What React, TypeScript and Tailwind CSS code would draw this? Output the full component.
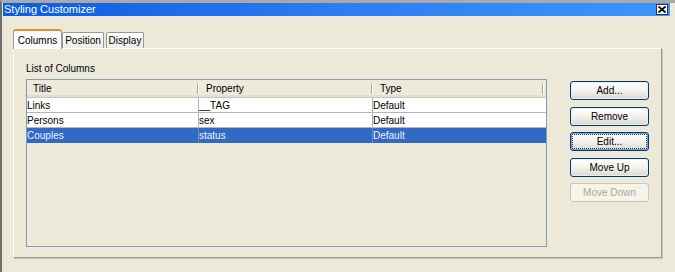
import React from "react";

const rows = [
  { t: "Links", p: "__TAG", y: "Default", sel: false },
  { t: "Persons", p: "sex", y: "Default", sel: false },
  { t: "Couples", p: "status", y: "Default", sel: true },
];

function Btn({ label, kind }: { label: string; kind?: "default" | "disabled" }) {
  if (kind === "disabled") {
    return (
      <div className="h-[19px] w-[79px] rounded-[3px] border border-[#C9C7BA] bg-[#F5F4EA] flex items-center justify-center text-[#ACA899]">
        {label}
      </div>
    );
  }
  if (kind === "default") {
    return (
      <div className="h-[19px] w-[79px] rounded-[3px] border border-[#003C74] bg-gradient-to-b from-[#FFFFFF] via-[#F3F2EC] to-[#DCD9CE] p-[1px] shadow-[inset_0_0_0_1px_#7B9FE6]">
        <div className="h-full w-full border border-dotted border-[#333] flex items-center justify-center text-black">
          {label}
        </div>
      </div>
    );
  }
  return (
    <div className="h-[19px] w-[79px] rounded-[3px] border border-[#003C74] bg-gradient-to-b from-[#FFFFFF] via-[#F3F2EC] to-[#DCD9CE] shadow-[inset_0_0_0_1px_#E8EEF8] flex items-center justify-center text-black">
      {label}
    </div>
  );
}

export default function App() {
  return (
    <div className="w-[675px] h-[272px] overflow-hidden bg-[#ECE9D8] border-l-2 border-l-[#6E6E6E] border-t-[3px] border-t-[#A9A9A9] font-['Liberation_Sans',Arial,sans-serif] text-[10px] leading-[13px] text-black flex flex-col">
      {/* title bar */}
      <div className="h-[13px] ml-[1px] mr-[5px] bg-gradient-to-r from-[#0A5BE0] via-[#2A7DF2] to-[#3D94FF] flex items-center justify-between">
        <span className="pl-[1px] text-white text-[11px] leading-[13px]">Styling Customizer</span>
        <div className="mr-[2px] h-[11px] w-[12px] bg-white border border-[#333] flex items-center justify-center">
          <svg width="8" height="7" viewBox="0 0 8 7">
            <path d="M0.5 0.5 L7.5 6.5 M7.5 0.5 L0.5 6.5" stroke="#000" strokeWidth="1.8" />
          </svg>
        </div>
      </div>

      {/* tabs */}
      <div className="mt-[13px] ml-[11px] h-[19px] flex items-end relative z-10">
        <div className="w-[49px] h-[20px] -mb-px rounded-t-[3px] border border-b-0 border-[#919B9C] border-t-[#E68B2C] border-t-2 bg-[#FCFCFE] flex items-center justify-center">
          Columns
        </div>
        <div className="w-[42px] h-[16px] rounded-t-[2px] border border-b-0 border-[#919B9C] bg-gradient-to-b from-white to-[#ECEBE6] flex items-center justify-center">
          Position
        </div>
        <div className="ml-[2px] w-[38px] h-[16px] rounded-t-[2px] border border-b-0 border-[#919B9C] bg-gradient-to-b from-white to-[#ECEBE6] flex items-center justify-center">
          Display
        </div>
      </div>

      {/* panel */}
      <div className="ml-[11px] w-[649px] h-[210px] border border-[#919B9C] border-l-white border-t-[#FCFCFE] shadow-[1px_1px_0_#C9C7BA] bg-[#ECE9D8] flex">
        <div className="pl-[12px] pt-[13px] flex flex-col">
          <div className="h-[13px]">List of Columns</div>
          <div className="mt-[4px] w-[521px] h-[168px] border border-[#7F9DB9] bg-[#ECE9D8] flex flex-col">
            {/* header */}
            <div className="h-[18px] flex border-b border-[#CBC7B8] bg-[#EBEADB] shadow-[inset_0_-2px_0_#E2DFD2]">
              <div className="w-[172px] relative pl-[6px] flex items-center">
                Title
                <div className="absolute right-0 top-[3px] bottom-[3px] w-[2px] border-l border-[#ACA899] border-r border-r-white" />
              </div>
              <div className="w-[174px] relative pl-[7px] flex items-center">
                Property
                <div className="absolute right-0 top-[3px] bottom-[3px] w-[2px] border-l border-[#ACA899] border-r border-r-white" />
              </div>
              <div className="flex-1 relative pl-[7px] flex items-center">
                Type
                <div className="absolute right-[2px] top-[3px] bottom-[3px] w-[2px] border-l border-[#ACA899] border-r border-r-white" />
              </div>
            </div>
            {rows.map((r) => (
              <div
                key={r.t}
                className={
                  r.sel
                    ? "h-[15px] flex bg-[#316AC5] text-[#EEF0FF]"
                    : "h-[15px] flex bg-white border-b border-[#B5B5B5]"
                }
              >
                <div className={"w-[172px] flex items-center border-r " + (r.sel ? "border-[#6C86AE]" : "border-[#B5B5B5]")}>{r.t}</div>
                <div className={"w-[174px] flex items-center border-r " + (r.sel ? "border-[#6C86AE]" : "border-[#B5B5B5]")}>{r.p}</div>
                <div className="flex-1 flex items-center">{r.y}</div>
              </div>
            ))}
          </div>
        </div>
        <div className="ml-[23px] pt-[32px] flex flex-col gap-[6.5px]">
          <Btn label="Add..." />
          <Btn label="Remove" />
          <Btn label="Edit..." kind="default" />
          <Btn label="Move Up" />
          <Btn label="Move Down" kind="disabled" />
        </div>
      </div>
    </div>
  );
}
